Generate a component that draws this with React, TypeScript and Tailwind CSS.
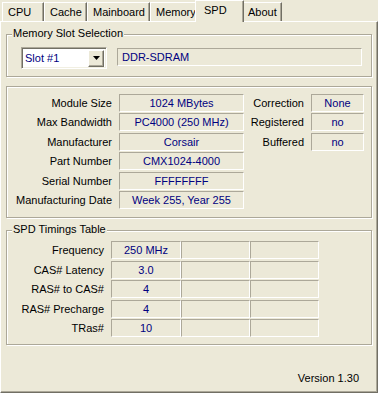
import type { ReactNode } from "react";
import clsx from "clsx";

// CPU-Z style "SPD" tab, Windows classic look

const TABS = [
  { label: "CPU", w: "w-[42px]" },
  { label: "Cache", w: "w-[43px]" },
  { label: "Mainboard", w: "w-[63px]" },
  { label: "Memory", w: "w-[47px]" },
  { label: "SPD", w: "w-[49px]", active: true },
  { label: "About", w: "w-[40px]" },
];

const MODULE_ROWS = [
  { label: "Module Size", value: "1024 MBytes", mt: "mt-0", right: { label: "Correction", value: "None" } },
  { label: "Max Bandwidth", value: "PC4000 (250 MHz)", mt: "mt-[1px]", right: { label: "Registered", value: "no" } },
  { label: "Manufacturer", value: "Corsair", mt: "mt-[2px]", right: { label: "Buffered", value: "no" } },
  { label: "Part Number", value: "CMX1024-4000", mt: "mt-[1px]" },
  { label: "Serial Number", value: "FFFFFFFF", mt: "mt-[2px]" },
  { label: "Manufacturing Date", value: "Week 255, Year 255", mt: "mt-[1px]" },
];

const TIMING_ROWS = [
  { label: "Frequency", value: "250 MHz", mt: "mt-0" },
  { label: "CAS# Latency", value: "3.0", mt: "mt-[2px]" },
  { label: "RAS# to CAS#", value: "4", mt: "mt-[1px]" },
  { label: "RAS# Precharge", value: "4", mt: "mt-[2px]" },
  { label: "TRas#", value: "10", mt: "mt-[1px]" },
];

const sunken = "border-t border-l border-t-[#ACA899] border-l-[#ACA899] border-b border-r border-b-white border-r-white";

function Group({ title, className, children }: { title?: string; className?: string; children: ReactNode }) {
  return (
    <div
      className={clsx(
        "relative ml-[5px] w-[366px] border border-[#ACA899] shadow-[inset_1px_1px_0_#fff,1px_1px_0_#fff]",
        className
      )}
    >
      {title && (
        <span className="absolute -top-[8px] left-[5px] bg-[#ECE9D8] px-[1px] leading-[13px] text-black">
          {title}
        </span>
      )}
      {children}
    </div>
  );
}

function Field({ value, className }: { value?: string; className?: string }) {
  return (
    <div className={clsx("h-[18px] leading-[16px] text-center text-[#000080] whitespace-nowrap", sunken, className)}>
      {value}
    </div>
  );
}

export default function App() {
  return (
    <div className="w-[378px] h-[393px] bg-[#ECE9D8] font-['Liberation_Sans',Arial,sans-serif] text-[11px] text-black overflow-hidden">
      {/* Tabs */}
      <div className="flex items-end h-[21px] pl-[2px]">
        {TABS.map((t) =>
          t.active ? (
            <div
              key={t.label}
              className={clsx(
                "relative z-10 -mx-[2px] -mb-[1px] h-[22px] bg-[#ECE9D8] border-t border-l border-white border-r border-r-[#716F64] shadow-[inset_-1px_0_0_#ACA899] pt-[3px] pl-[8px] leading-[13px]",
                t.w
              )}
            >
              {t.label}
            </div>
          ) : (
            <div
              key={t.label}
              className={clsx(
                "h-[19px] border-t border-l border-white border-r border-r-[#716F64] shadow-[inset_-1px_0_0_#ACA899] pt-[3px] pl-[5px] leading-[13px] whitespace-nowrap",
                t.w
              )}
            >
              {t.label}
            </div>
          )
        )}
      </div>

      {/* Tab panel */}
      <div className="w-[378px] h-[372px] border-t border-l border-white border-r border-b border-r-[#716F64] border-b-[#716F64] shadow-[inset_-1px_-1px_0_#ACA899]">
        {/* Memory slot selection */}
        <Group title="Memory Slot Selection" className="mt-[12px] h-[43px]">
          <div className="flex items-start pl-[14px] pt-[12px]">
            <div className="flex items-center w-[86px] h-[22px] bg-white border-t border-l border-t-[#ACA899] border-l-[#ACA899] border-b border-r border-b-white border-r-white shadow-[inset_1px_1px_0_#716F64,inset_-1px_-1px_0_#F1EFE2]">
              <span className="flex-1 pl-[3px] text-[#000080] leading-[13px]">Slot #1</span>
              <div className="mr-[2px] w-[16px] h-[17px] flex items-center justify-center bg-[#ECE9D8] border-t border-l border-white border-b border-r border-b-[#716F64] border-r-[#716F64] shadow-[inset_-1px_-1px_0_#ACA899]">
                <svg width="7" height="4" viewBox="0 0 7 4">
                  <path d="M0 0h7L3.5 4z" fill="#000" />
                </svg>
              </div>
            </div>
            <div className={clsx("ml-[10px] mt-[1px] w-[245px] h-[18px] leading-[16px] pl-[4px] text-[#000080]", sunken)}>
              DDR-SDRAM
            </div>
          </div>
        </Group>

        {/* Module info */}
        <Group className="mt-[9px] h-[132px]">
          <div className="flex flex-col pt-[7px]">
            {MODULE_ROWS.map((r) => (
              <div key={r.label} className={clsx("flex items-center h-[18px]", r.mt)}>
                <div className="w-[105px] text-right leading-[13px] whitespace-nowrap">{r.label}</div>
                <Field value={r.value} className="ml-[7px] w-[125px]" />
                {r.right && (
                  <>
                    <div className="w-[60px] text-right leading-[13px] whitespace-nowrap">{r.right.label}</div>
                    <Field value={r.right.value} className="ml-[7px] w-[53px]" />
                  </>
                )}
              </div>
            ))}
          </div>
        </Group>

        {/* SPD timings */}
        <Group title="SPD Timings Table" className="mt-[12px] h-[115px]">
          <div className="flex flex-col pt-[10px]">
            {TIMING_ROWS.map((r) => (
              <div key={r.label} className={clsx("flex items-center h-[18px]", r.mt)}>
                <div className="w-[97px] text-right leading-[13px] whitespace-nowrap">{r.label}</div>
                <Field value={r.value} className="ml-[7px] w-[70px]" />
                <Field className="w-[69px]" />
                <Field className="w-[69px]" />
              </div>
            ))}
          </div>
        </Group>

        <div className="flex justify-end pr-[18px] mt-[27px] leading-[13px]">Version 1.30</div>
      </div>
    </div>
  );
}
